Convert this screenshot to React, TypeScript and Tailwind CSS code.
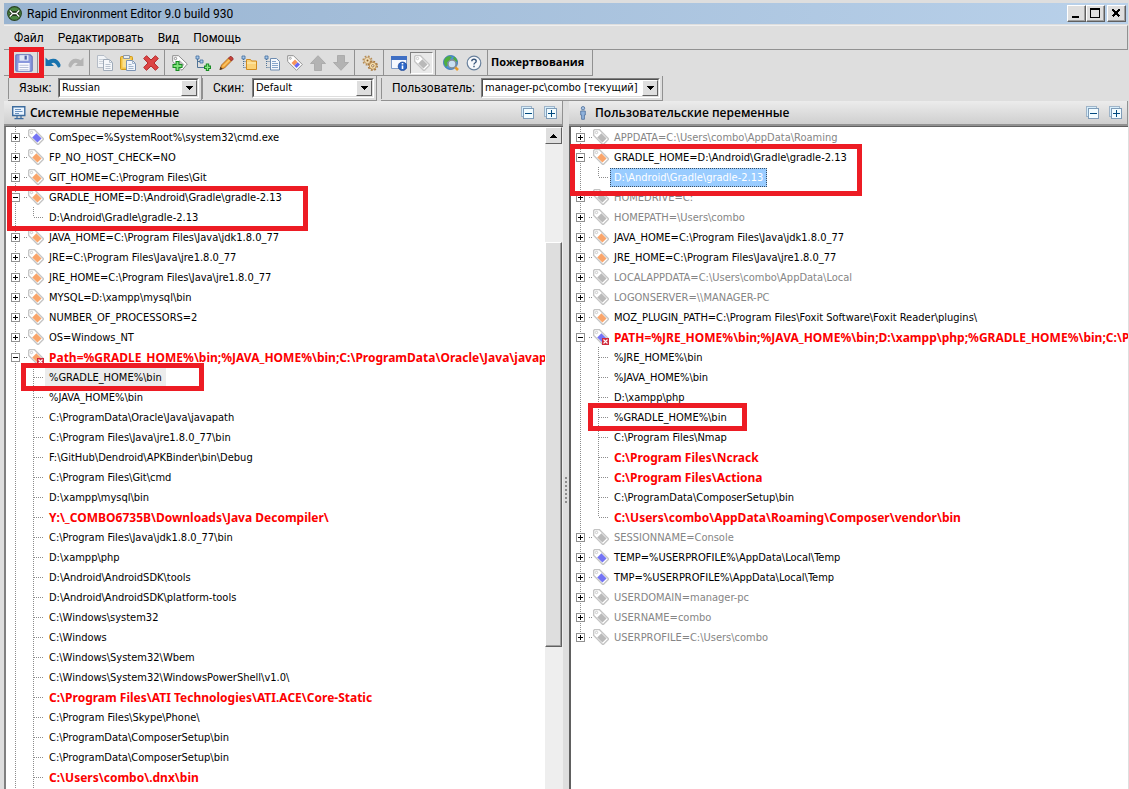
import { useState } from "react";
import type { ReactNode } from "react";

type Kind = "orange" | "blue" | "gray" | "orangeBad" | "blueBad";

type RowData = {
  text: string;
  kind?: Kind;
  open?: boolean;
  bad?: boolean;
  child?: boolean;
  last?: boolean;
  selected?: boolean;
  hot?: boolean;
  mark?: "variable" | "variableWide" | "entry" | "entryNarrow";
};

const systemRows: RowData[] = [
  { text: "ComSpec=%SystemRoot%\\system32\\cmd.exe", kind: "blue" },
  { text: "FP_NO_HOST_CHECK=NO", kind: "orange" },
  { text: "GIT_HOME=C:\\Program Files\\Git", kind: "orange" },
  { text: "GRADLE_HOME=D:\\Android\\Gradle\\gradle-2.13", kind: "orange", open: true, mark: "variableWide" },
  { text: "D:\\Android\\Gradle\\gradle-2.13", child: true, last: true },
  { text: "JAVA_HOME=C:\\Program Files\\Java\\jdk1.8.0_77", kind: "orange" },
  { text: "JRE=C:\\Program Files\\Java\\jre1.8.0_77", kind: "orange" },
  { text: "JRE_HOME=C:\\Program Files\\Java\\jre1.8.0_77", kind: "orange" },
  { text: "MYSQL=D:\\xampp\\mysql\\bin", kind: "orange" },
  { text: "NUMBER_OF_PROCESSORS=2", kind: "orange" },
  { text: "OS=Windows_NT", kind: "orange" },
  { text: "Path=%GRADLE_HOME%\\bin;%JAVA_HOME%\\bin;C:\\ProgramData\\Oracle\\Java\\javap", kind: "orangeBad", open: true, bad: true },
  { text: "%GRADLE_HOME%\\bin", child: true, hot: true, mark: "entry" },
  { text: "%JAVA_HOME%\\bin", child: true },
  { text: "C:\\ProgramData\\Oracle\\Java\\javapath", child: true },
  { text: "C:\\Program Files\\Java\\jre1.8.0_77\\bin", child: true },
  { text: "F:\\GitHub\\Dendroid\\APKBinder\\bin\\Debug", child: true },
  { text: "C:\\Program Files\\Git\\cmd", child: true },
  { text: "D:\\xampp\\mysql\\bin", child: true },
  { text: "Y:\\_COMBO6735B\\Downloads\\Java Decompiler\\", child: true, bad: true },
  { text: "C:\\Program Files\\Java\\jdk1.8.0_77\\bin", child: true },
  { text: "D:\\xampp\\php", child: true },
  { text: "D:\\Android\\AndroidSDK\\tools", child: true },
  { text: "D:\\Android\\AndroidSDK\\platform-tools", child: true },
  { text: "C:\\Windows\\system32", child: true },
  { text: "C:\\Windows", child: true },
  { text: "C:\\Windows\\System32\\Wbem", child: true },
  { text: "C:\\Windows\\System32\\WindowsPowerShell\\v1.0\\", child: true },
  { text: "C:\\Program Files\\ATI Technologies\\ATI.ACE\\Core-Static", child: true, bad: true },
  { text: "C:\\Program Files\\Skype\\Phone\\", child: true },
  { text: "C:\\ProgramData\\ComposerSetup\\bin", child: true },
  { text: "C:\\ProgramData\\ComposerSetup\\bin", child: true },
  { text: "C:\\Users\\combo\\.dnx\\bin", child: true, bad: true },
  { text: "", child: true },
];

const userRows: RowData[] = [
  { text: "APPDATA=C:\\Users\\combo\\AppData\\Roaming", kind: "gray" },
  { text: "GRADLE_HOME=D:\\Android\\Gradle\\gradle-2.13", kind: "orange", open: true, mark: "variable" },
  { text: "D:\\Android\\Gradle\\gradle-2.13", child: true, last: true, selected: true },
  { text: "HOMEDRIVE=C:", kind: "gray" },
  { text: "HOMEPATH=\\Users\\combo", kind: "gray" },
  { text: "JAVA_HOME=C:\\Program Files\\Java\\jdk1.8.0_77", kind: "orange" },
  { text: "JRE_HOME=C:\\Program Files\\Java\\jre1.8.0_77", kind: "orange" },
  { text: "LOCALAPPDATA=C:\\Users\\combo\\AppData\\Local", kind: "gray" },
  { text: "LOGONSERVER=\\\\MANAGER-PC", kind: "gray" },
  { text: "MOZ_PLUGIN_PATH=C:\\Program Files\\Foxit Software\\Foxit Reader\\plugins\\", kind: "orange" },
  { text: "PATH=%JRE_HOME%\\bin;%JAVA_HOME%\\bin;D:\\xampp\\php;%GRADLE_HOME%\\bin;C:\\P", kind: "blueBad", open: true, bad: true },
  { text: "%JRE_HOME%\\bin", child: true },
  { text: "%JAVA_HOME%\\bin", child: true },
  { text: "D:\\xampp\\php", child: true },
  { text: "%GRADLE_HOME%\\bin", child: true, mark: "entryNarrow" },
  { text: "C:\\Program Files\\Nmap", child: true },
  { text: "C:\\Program Files\\Ncrack", child: true, bad: true },
  { text: "C:\\Program Files\\Actiona", child: true, bad: true },
  { text: "C:\\ProgramData\\ComposerSetup\\bin", child: true },
  { text: "C:\\Users\\combo\\AppData\\Roaming\\Composer\\vendor\\bin", child: true, bad: true, last: true },
  { text: "SESSIONNAME=Console", kind: "gray" },
  { text: "TEMP=%USERPROFILE%\\AppData\\Local\\Temp", kind: "blue" },
  { text: "TMP=%USERPROFILE%\\AppData\\Local\\Temp", kind: "blue" },
  { text: "USERDOMAIN=manager-pc", kind: "gray" },
  { text: "USERNAME=combo", kind: "gray" },
  { text: "USERPROFILE=C:\\Users\\combo", kind: "gray" },
];

const markStyles = {
  variableWide: "left-[1px] top-[-1px] h-[45px] w-[301px]",
  variable: "left-[-1px] top-[-3px] h-[52px] w-[292px]",
  entry: "left-[15px] top-[-4px] h-7 w-[183px]",
  entryNarrow: "left-[17px] top-[-4px] h-7 w-[159px]",
};

const tagFill: Record<Kind, string> = {
  orange: "#f9a56b",
  orangeBad: "#f9a56b",
  blue: "#7474f4",
  blueBad: "#7474f4",
  gray: "#b9b9b9",
};

function Svg({ children, size = 16 }: { children: ReactNode; size?: number }) {
  return (
    <svg width={size} height={size} viewBox="0 0 16 16" fill="none" className="shrink-0" aria-hidden="true">
      {children}
    </svg>
  );
}

function TagIcon({ kind }: { kind: Kind }) {
  return (
    <Svg>
      <path d="M.7 1.5 L1.5.7 H6.5 L15.3 9.5 V10.5 L10.5 15.3 H9.5 L.7 6.5Z" fill="#fff" stroke="#c4c4c4" strokeWidth="1.3" />
      <circle cx="3.5" cy="3.5" r="1.2" fill="#fff" stroke="#bcbcbc" strokeWidth=".8" />
      <path d="M8.4 4.2 L13.6 9.4 L9.4 13.6 L4.2 8.4Z" fill={tagFill[kind]} />
      {(kind === "orangeBad" || kind === "blueBad") && (
        <>
          <path d="M9 9H16V16H9Z" fill="#d02a3c" />
          <path d="M10.5 10.5 L14.5 14.5 M14.5 10.5 L10.5 14.5" stroke="#fff" strokeWidth="1.1" />
        </>
      )}
    </Svg>
  );
}

function Expander({ open }: { open: boolean }) {
  return (
    <svg width="9" height="9" viewBox="0 0 9 9" shapeRendering="crispEdges" className="block">
      <path d="M.5 .5H8.5V8.5H.5Z" fill="#fff" stroke="#919191" />
      <path d={open ? "M2 4.5H7" : "M2 4.5H7M4.5 2V7"} stroke="#000" />
    </svg>
  );
}

function Guide({ last = false }: { last?: boolean }) {
  return (
    <svg width="1" height="20" viewBox="0 0 1 20" shapeRendering="crispEdges" className="block" aria-hidden="true">
      <path d={last ? "M.5 0V10" : "M.5 0V20"} stroke="#8c8c8c" strokeDasharray="1 1" />
    </svg>
  );
}

function Stub({ wide = false }: { wide?: boolean }) {
  return (
    <svg width={wide ? 9 : 3} height="1" shapeRendering="crispEdges" className="block shrink-0" aria-hidden="true">
      <path d={wide ? "M0 .5H9" : "M0 .5H3"} stroke="#8c8c8c" strokeDasharray="1 1" />
    </svg>
  );
}

function Row({ row, edge }: { row: RowData; edge: boolean }) {
  const [open, setOpen] = useState(Boolean(row.open));
  const color = row.selected
    ? "text-white"
    : row.bad
      ? "text-[#fc0000]"
      : row.kind === "gray"
        ? "text-[#858585]"
        : "text-black";
  return (
    <li className="relative flex h-5 items-center whitespace-nowrap">
      <span className="grid w-[18px] shrink-0 place-items-center">
        <span className="col-start-1 row-start-1">
          <Guide last={edge} />
        </span>
        {!row.child && (
          <button
            type="button"
            aria-label={row.text.split("=")[0]}
            aria-expanded={open}
            onClick={() => setOpen(!open)}
            className="z-[1] col-start-1 row-start-1"
          >
            <Expander open={open} />
          </button>
        )}
      </span>
      {row.child ? (
        <span className="flex w-[21px] shrink-0 items-center pl-[9px]">
          <Guide last={row.last} />
          <Stub wide />
        </span>
      ) : (
        <span className="flex w-[21px] shrink-0 items-center gap-px">
          <Stub />
          <TagIcon kind={row.kind ?? "orange"} />
        </span>
      )}
      {row.text && (
        <span
          className={`${color} ${row.bad ? "font-['Noto_Sans',sans-serif] text-xs font-bold" : "text-[11px]"} ${
            row.selected
              ? "bg-[#99ccff] outline-1 outline-dotted -outline-offset-1 outline-[#3c5064]"
              : row.hot
                ? "bg-[#ececec]"
                : ""
          } h-[19px] min-w-0 overflow-hidden px-1`}
        >
          <span className="block leading-[19px]">{row.text}</span>
        </span>
      )}
      {row.mark && (
        <span className={`${markStyles[row.mark]} pointer-events-none absolute z-10 border-5 border-[#ed1c24]`} />
      )}
    </li>
  );
}

function Tree({ rows, label }: { rows: RowData[]; label: string }) {
  return (
    <ul aria-label={label} className="min-w-0 flex-1 font-['DejaVu_Sans_Condensed','DejaVu_Sans',sans-serif]">
      {rows.map((row, i) => (
        <Row key={i} row={row} edge={i === rows.length - 1 && !row.child} />
      ))}
    </ul>
  );
}

function CollapseIcon({ plus = false }: { plus?: boolean }) {
  return (
    <svg width="13" height="13" viewBox="0 0 13 13" shapeRendering="crispEdges" aria-hidden="true">
      <path d="M.5 .5H10.5V10.5H.5Z" fill="#d6eefc" stroke="#9fb4c8" />
      <path d="M2.5 2.5H12.5V12.5H2.5Z" fill="#f2fcff" stroke="#7f9cb8" />
      <path d={plus ? "M4 7.5H11M7.5 4V11" : "M4 7.5H11"} stroke="#004a80" />
    </svg>
  );
}

function PanelHeader({ title, icon }: { title: string; icon: ReactNode }) {
  return (
    <header className="flex h-[25px] items-center border-r border-b-2 border-[#919191] bg-linear-to-b from-[#ececec] to-[#cfcfcf] pl-2">
      {icon}
      <h2 className="flex-1 pl-1 font-['Open_Sans',sans-serif] text-xs font-semibold">{title}</h2>
      <button type="button" aria-label="Свернуть все" className="grid w-[23px] place-items-center">
        <CollapseIcon />
      </button>
      <button type="button" aria-label="Развернуть все" className="grid w-[23px] place-items-center">
        <CollapseIcon plus />
      </button>
    </header>
  );
}

function Tool({ label, children, pressed = false }: { label: string; children: ReactNode; pressed?: boolean }) {
  return (
    <button
      type="button"
      aria-label={label}
      className={`grid h-[22px] w-[23px] shrink-0 place-items-center border ${
        pressed ? "border-t-[#808080] border-r-white border-b-white border-l-[#808080] bg-[#e9e9e9]" : "border-transparent"
      }`}
    >
      {children}
    </button>
  );
}

function Sep() {
  return <span className="mr-[3px] ml-[2px] w-px shrink-0 self-stretch bg-[#919191]" />;
}

function Picker({ id, label, options, width, frame }: { id: string; label: string; options: string[]; width: string; frame: string }) {
  return (
    <div className={`${frame} flex h-[25px] items-center justify-between border-r border-b border-[#919191] pr-[2px]`}>
      <span className="h-[21px] w-px bg-[#919191]" />
      <label htmlFor={id} className="flex-1 pl-[10px]">
        {label}
      </label>
      <span className={`${width} relative flex h-5 border border-t-[#808080] border-r-white border-b-white border-l-[#808080] bg-white`}>
        <select
          id={id}
          className="w-full appearance-none border border-t-[#505050] border-r-[#dedede] border-b-[#dedede] border-l-[#505050] bg-white pr-[17px] pl-[2px] font-['DejaVu_Sans_Condensed','DejaVu_Sans',sans-serif] text-[11px] text-black outline-none"
        >
          {options.map((o) => (
            <option key={o}>{o}</option>
          ))}
        </select>
        <span className="pointer-events-none absolute top-px right-px bottom-px grid w-4 place-items-center border-t border-r border-b border-l border-t-white border-r-[#606060] border-b-[#606060] border-l-white bg-[#dedede]">
          <svg width="7" height="4" viewBox="0 0 7 4" shapeRendering="crispEdges">
            <path d="M0 0H7L3.5 4Z" fill="#000" />
          </svg>
        </span>
      </span>
    </div>
  );
}

function CaptionButton({ label, children }: { label: string; children: ReactNode }) {
  return (
    <button
      type="button"
      aria-label={label}
      className="grid h-[17px] w-[19px] place-items-center border border-t-white border-r-[#606060] border-b-[#606060] border-l-white bg-[#dedede] shadow-[inset_-1px_-1px_0_#a0a0a0]"
    >
      <svg width="13" height="11" viewBox="0 0 13 11" shapeRendering="crispEdges" fill="none" stroke="#000">
        {children}
      </svg>
    </button>
  );
}

function Branches() {
  return <path d="M2.5 2V12.5M2.5 6.5H6M2.5 12.5H6" stroke="#4f7396" strokeDasharray="1 1" />;
}

function Toolbar() {
  return (
    <div className="flex">
      <div className="flex h-[26px] items-center border-r border-b border-[#919191] pl-2">
        <span className="relative flex">
          <Tool label="Сохранить">
            <Svg size={18}>
              <path d="M.7 1.5Q.7.7 1.5.7H13.5L15.3 2.5V14.5Q15.3 15.3 14.5 15.3H1.5Q.7 15.3.7 14.5Z" fill="#8a98dc" stroke="#6673ba" />
              <path d="M4 1H12V6H4Z" fill="#dfe6f5" />
              <path d="M8.5 1.5H10.5V5H8.5Z" fill="#4d5ea8" />
              <path d="M3 8H13V15H3Z" fill="#fafaff" />
              <path d="M4 10H12M4 12H12M4 14H12" stroke="#b7bfd8" />
            </Svg>
          </Tool>
          <span className="pointer-events-none absolute top-[-5px] left-[-3px] z-10 h-[31px] w-[35px] border-5 border-[#ed1c24]" />
        </span>
        <Sep />
        <Tool label="Отменить">
          <Svg>
            <path d="M.5 2.5V11H9L6.3 8.3Q10 6 13 12.500Q15.800 13 15.500 9.500Q13 3.500 8 3.800Q5 3.800 3.300 5.300Z" fill="#1973ae" />
          </Svg>
        </Tool>
        <Tool label="Повторить">
          <Svg>
            <path d="M15.500 2.500V11H7L9.700 8.300Q6 6 3 12.500Q.2 13 .5 9.500Q3 3.500 8 3.800Q11 3.800 12.700 5.300Z" fill="#b4b4b4" />
          </Svg>
        </Tool>
        <Sep />
        <Tool label="Копировать">
          <Svg>
            <path d="M.5.5H7L10 3.500V12.500H.5Z" fill="#f2f4f7" stroke="#b5bcc6" />
            <path d="M2 4.500H7M2 6.500H7M2 8.500H7" stroke="#ccd2da" />
            <path d="M6.500 4.500H12.500L15.500 7.500V15.500H6.500Z" fill="#f5f7fa" stroke="#9faab8" />
            <path d="M12.500 4.500V7.500H15.500M8.500 9.500H13.500M8.500 11.500H13.500M8.500 13.500H13.500" stroke="#b9c2ce" />
          </Svg>
        </Tool>
        <Tool label="Вставить">
          <Svg>
            <rect x=".5" y="1.500" width="12" height="13" rx="1" fill="#f6c443" stroke="#cf9a1b" />
            <path d="M2.500 3.500H10.500V12.500H2.500Z" fill="#fbe08c" />
            <path d="M3.500.5H9.500V3.500H3.500Z" fill="#e8edf3" stroke="#8d99a8" />
            <path d="M6.500 5.500H12.500L15.500 8.500V15.500H6.500Z" fill="#f1f6fc" stroke="#7c94b4" />
            <path d="M12.500 5.500V8.500H15.500M8.500 9.500H11.500M8.500 11.500H13.500M8.500 13.500H13.500" stroke="#a3b5cc" />
          </Svg>
        </Tool>
        <Tool label="Удалить">
          <Svg>
            <path d="M3.500.7L8 5L12.500.7L15.300 3.500L11 8L15.300 12.500L12.500 15.300L8 11L3.500 15.300L.7 12.500L5 8L.7 3.500Z" fill="#dc4444" stroke="#b42a2a" strokeLinejoin="round" />
          </Svg>
        </Tool>
        <Sep />
        <Tool label="Добавить переменную">
          <Svg>
            <path d="M.7.7H6.500L15.300 9L10 15.300L.7 6.500Z" fill="#fff" stroke="#8d8d8d" />
            <circle cx="3.500" cy="3.500" r="1.200" stroke="#8d8d8d" />
            <path d="M7.500 5L12.500 9.500L10.500 12L6 7.500Z" fill="#b9b9b9" />
            <path d="M5.500 6V16M.5 11H10.500" stroke="#178a22" strokeWidth="4" />
            <path d="M5.500 7V15M1.500 11H9.500" stroke="#7fe27a" strokeWidth="1.800" />
          </Svg>
        </Tool>
        <Tool label="Добавить значение">
          <Svg>
            <path d="M2.500 3V12.500H9M2.500 6.500H6" stroke="#4f7396" />
            <path d="M1 1H4V4H1ZM5 5H8V8H5Z" fill="#a9c8ea" stroke="#3f6d9e" strokeWidth=".8" />
            <path d="M12.500 8.500V16M9 12.300H16" stroke="#178a22" strokeWidth="3.400" />
            <path d="M12.500 9.500V15M10 12.300H15" stroke="#8be886" strokeWidth="1.300" />
          </Svg>
        </Tool>
        <Tool label="Изменить">
          <Svg>
            <path d="M2 14.500L3.500 10L10.500 3L13.500 6L6.500 13Z" fill="#f2a63a" stroke="#a4601b" strokeWidth=".8" />
            <path d="M5 11.500L12 4.500" stroke="#ffe08a" />
            <path d="M10.500 3L12 1.500Q13 1 14.500 2.500Q15.500 4 15 4.500L13.500 6Z" fill="#c6403a" stroke="#8e2a26" strokeWidth=".8" />
            <path d="M1.500 15L2.500 11.800L4.800 14Z" fill="#4a3420" />
          </Svg>
        </Tool>
        <Tool label="Выбрать папку">
          <Svg>
            <Branches />
            <path d="M1 1H4V4H1Z" fill="#a9c8ea" stroke="#3f6d9e" strokeWidth=".8" />
            <path d="M5.500 4.500H9.500L10.500 6H15.500V14.500H5.500Z" fill="#fbd277" stroke="#d08a20" />
            <path d="M6 8H15" stroke="#fff0c0" />
          </Svg>
        </Tool>
        <Tool label="Выбрать файл">
          <Svg>
            <Branches />
            <path d="M1 1H4V4H1Z" fill="#a9c8ea" stroke="#3f6d9e" strokeWidth=".8" />
            <path d="M6.500 3.500H12.500L15.500 6.500V15H6.500Z" fill="#f4f8fd" stroke="#6e8cb0" />
            <path d="M8 6.500H12M8 8.500H14M8 10.500H14M8 12.500H14" stroke="#86a5cb" />
          </Svg>
        </Tool>
        <Tool label="Тип переменной">
          <Svg>
            <path d="M.7.7H6.500L15.300 9.500L9.500 15.300L.7 6.500Z" fill="#fff" stroke="#909090" />
            <circle cx="3.300" cy="3.300" r="1" stroke="#909090" strokeWidth=".8" />
            <path d="M8 4.500L10.700 7.200L7.200 10.700L4.500 8Z" fill="#f7955b" />
            <path d="M10.700 7.200L13 9.500L9.500 13L7.200 10.700Z" fill="#6767f2" />
          </Svg>
        </Tool>
        <Tool label="Вверх">
          <Svg>
            <path d="M8 .7L15.500 8.500H11.500V15.500H4.500V8.500H.5Z" fill="#b3b3b3" stroke="#a5a5a5" strokeWidth=".8" />
          </Svg>
        </Tool>
        <Tool label="Вниз">
          <Svg>
            <path d="M8 15.300L15.500 7.500H11.500V.5H4.500V7.500H.5Z" fill="#b3b3b3" stroke="#a5a5a5" strokeWidth=".8" />
          </Svg>
        </Tool>
        <Sep />
        <Tool label="Настройки">
          <Svg>
            <circle cx="5.500" cy="5.500" r="4.300" stroke="#b78d55" strokeWidth="1.600" strokeDasharray="1.700 1.670" />
            <circle cx="5.500" cy="5.500" r="3.200" fill="#f0dcb4" stroke="#b78d55" strokeWidth=".8" />
            <circle cx="5.500" cy="5.500" r="1" fill="#8a5d28" />
            <circle cx="10.800" cy="10.800" r="4.400" stroke="#a9793c" strokeWidth="1.600" strokeDasharray="1.800 1.650" />
            <circle cx="10.800" cy="10.800" r="3.500" fill="#f6e0b0" stroke="#a9793c" strokeWidth=".8" />
            <circle cx="10.800" cy="10.800" r="1.200" fill="#fff" stroke="#8a5d28" strokeWidth=".8" />
          </Svg>
        </Tool>
        <Sep />
        <Tool label="Сведения">
          <Svg>
            <path d="M.5 1.500H15.500V13.500H.5Z" fill="#f5f9ff" stroke="#7e9cc8" />
            <path d="M0 1H16V5H0Z" fill="#3f6fc4" />
            <circle cx="11.500" cy="11.300" r="4.300" fill="#2c67c8" stroke="#1c4590" strokeWidth=".7" />
            <path d="M11.500 8V9.500M11.500 10.500V14" stroke="#fff" strokeWidth="1.600" />
          </Svg>
        </Tool>
        <Tool label="Показать все переменные" pressed>
          <TagIcon kind="gray" />
        </Tool>
        <Sep />
        <Tool label="Проверить обновления">
          <Svg>
            <circle cx="7.500" cy="7.500" r="7" fill="#4a92d6" stroke="#2f6fae" strokeWidth=".8" />
            <path d="M1 6Q2 2 6 1L9 2L7 4L8 6L4 7L5 10L3 12Q.5 9 1 6ZM11 1.500Q14 3 14.400 7L12 6L10 4Z" fill="#4fae3e" />
            <circle cx="9" cy="9" r="4" fill="#c9e0f2" stroke="#848c94" strokeWidth="1.400" />
            <path d="M12.300 12.300L15 15" stroke="#e89a26" strokeWidth="2.600" />
          </Svg>
        </Tool>
        <Tool label="Справка">
          <Svg>
            <circle cx="8" cy="8" r="6.800" fill="#f7f9fc" stroke="#68809c" strokeWidth="1.200" />
            <path d="M5.800 6.300Q5.800 4.300 8 4.300T10.200 6.200Q10.200 7.300 8.900 8Q8 8.500 8 9.500" stroke="#37557a" strokeWidth="1.400" />
            <path d="M7.300 10.800H8.700V12.200H7.300Z" fill="#37557a" />
          </Svg>
        </Tool>
        <Sep />
        <button type="button" className="pr-2 font-['Open_Sans',sans-serif] text-[11px] font-bold">
          Пожертвования
        </button>
      </div>
    </div>
  );
}

export default function App() {
  return (
    <div className="flex h-screen flex-col overflow-hidden bg-[#dedede] pt-[3px] pl-1 font-['Roboto',sans-serif] text-xs text-black">
      <div className="mr-px flex h-[21px] shrink-0 items-center bg-linear-to-r from-[#99b4d1] to-[#b9d1ea] pr-[2px] pl-[3px]">
        <Svg size={15}>
          <circle cx="8" cy="8" r="7.300" fill="#4c8742" stroke="#27421f" strokeWidth="1.200" />
          <path d="M3 5L5 7H11L13 5M3 11L5 9H11L13 11" stroke="#16230f" strokeWidth="3" />
          <path d="M3 4.800L5.500 7.200M13 4.800L10.500 7.200M3 11.200L5.500 8.800M13 11.200L10.500 8.800M5 8H11" stroke="#fff" strokeWidth="1.500" />
        </Svg>
        <h1 className="flex-1 pl-[5px]">Rapid Environment Editor 9.0 build 930</h1>
        <CaptionButton label="Свернуть">
          <path d="M2 9H9" strokeWidth="2" />
        </CaptionButton>
        <CaptionButton label="Развернуть">
          <path d="M1.500 .5H10.500V9.500H1.500ZM1 1.500H11" />
        </CaptionButton>
        <span className="w-[2px]" />
        <CaptionButton label="Закрыть">
          <path d="M2.500 1.500L9.500 8.500M9.500 1.500L2.500 8.500" strokeWidth="2" />
        </CaptionButton>
      </div>

      <nav className="mt-px mr-px flex h-[25px] shrink-0 items-center gap-[14px] border-t border-r border-b border-t-[#efefef] border-r-[#919191] border-b-[#919191] pl-[10px]">
        <button type="button">Файл</button>
        <button type="button">Редактировать</button>
        <button type="button">Вид</button>
        <button type="button">Помощь</button>
      </nav>

      <Toolbar />

      <div className="flex shrink-0 pl-1">
        <Picker id="lang" label="Язык:" options={["Russian", "English"]} width="w-[141px]" frame="w-[194px]" />
        <Picker id="skin" label="Скин:" options={["Default"]} width="w-[122px]" frame="w-[175px]" />
        <span className="w-1" />
        <Picker id="user" label="Пользователь:" options={["manager-pc\\combo [текущий]"]} width="w-[179px]" frame="w-[282px]" />
      </div>

      <main className="flex min-h-0 flex-1 pr-px">
        <section className="flex min-w-0 flex-1 flex-col">
          <PanelHeader
            title="Системные переменные"
            icon={
              <svg width="14" height="14" viewBox="0 0 14 14" fill="none" aria-hidden="true">
                <path d="M.7.7H12.800V9.500H.7Z" fill="#eaf4ff" stroke="#3d6c9e" strokeWidth="1.400" />
                <path d="M3 3.500H9M3 5.500H10.500M3 7.500H7" stroke="#6d94c0" />
                <path d="M5 10V12M9 10V12M2.500 12.700H11.500" stroke="#3d6c9e" strokeWidth="1.200" />
              </svg>
            }
          />
          <div className="flex min-h-0 flex-1 border-t border-l-2 border-t-[#606060] border-l-[#808080] bg-white">
            <Tree rows={systemRows} label="Системные переменные" />
            <div className="flex w-[18px] shrink-0 flex-col bg-[#eeeeee]">
              <button
                type="button"
                aria-label="Прокрутить вверх"
                className="grid h-[17px] w-[17px] shrink-0 place-items-center border border-t-white border-r-[#606060] border-b-[#606060] border-l-white bg-[#dedede]"
              >
                <svg width="7" height="4" viewBox="0 0 7 4" shapeRendering="crispEdges">
                  <path d="M0 4H7L3.500 0Z" fill="#000" />
                </svg>
              </button>
              <div className="flex-[98]" />
              <div className="w-[17px] flex-[405] border border-t-white border-r-[#606060] border-b-[#606060] border-l-white bg-[#dedede] shadow-[inset_-1px_-1px_0_#a0a0a0]" />
              <div className="flex-[142]" />
            </div>
          </div>
        </section>

        <div className="flex w-[6px] shrink-0 flex-col items-center justify-center pt-[90px]">
          <span className="h-[26px] w-[2px] bg-[repeating-linear-gradient(to_bottom,#8c8c8c_0_2px,transparent_2px_4px)]" />
        </div>

        <section className="flex min-w-0 flex-1 flex-col">
          <PanelHeader
            title="Пользовательские переменные"
            icon={
              <svg width="14" height="14" viewBox="0 0 14 14" fill="none" aria-hidden="true">
                <circle cx="6" cy="2.200" r="1.700" fill="#a8c4e4" stroke="#4c6f9a" strokeWidth=".8" />
                <path d="M3.700 5H8.300V9H7.400V13.300H4.600V9H3.700Z" fill="#8fb2dc" stroke="#4c6f9a" strokeWidth=".8" />
              </svg>
            }
          />
          <div className="flex min-h-0 flex-1 border-t border-l-2 border-t-[#606060] border-l-[#606060] bg-white">
            <Tree rows={userRows} label="Пользовательские переменные" />
          </div>
        </section>
      </main>
    </div>
  );
}
